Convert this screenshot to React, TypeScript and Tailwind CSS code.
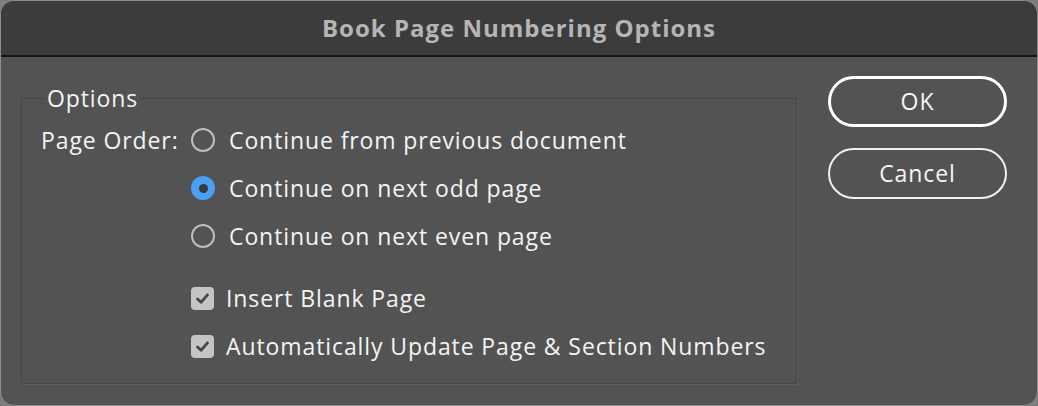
import React from 'react'

const font = { fontFamily: '"Open Sans", "Noto Sans", sans-serif' }

const Radio = ({ checked }: { checked?: boolean }) =>
  checked ? (
    <span className="flex h-[24px] w-[24px] items-center justify-center rounded-full bg-[#4b9ff3]">
      <span className="h-[9px] w-[9px] rounded-full bg-[#3a3a3a]" />
    </span>
  ) : (
    <span className="h-[24px] w-[24px] rounded-full border-2 border-[#bdbdbd]" />
  )

const Checkbox = () => (
  <span className="flex h-[23px] w-[23px] items-center justify-center rounded-[4px] bg-[#c4c4c4]">
    <svg width="15" height="15" viewBox="0 0 15 15">
      <path d="M2.5 8 L6 11.3 L12.5 3.8" fill="none" stroke="#474747" strokeWidth="2.8" strokeLinecap="round" strokeLinejoin="round" />
    </svg>
  </span>
)

export default function App() {
  const radios = [
    { label: 'Continue from previous document', checked: false },
    { label: 'Continue on next odd page', checked: true },
    { label: 'Continue on next even page', checked: false },
  ]
  return (
    <div className="h-[406px] w-[1038px] bg-[#7d7d7d]" style={font}>
      <div className="flex h-full w-full flex-col overflow-hidden rounded-[14px] border border-[#8c8c8c] bg-[#535353]">
        <div className="flex h-[56px] shrink-0 items-center justify-center border-b-2 border-[#141414] bg-[#3c3c3c]">
          <span className="text-[24px] font-bold tracking-[1px] text-[#b5b5b5]">Book Page Numbering Options</span>
        </div>
        <div className="flex flex-1 pl-[20px] pr-[30px] pt-[28px] tracking-[0.9px]">
          <fieldset className="m-0 h-[299px] w-[776px] rounded-[2px] border border-[#474747] pl-[19px] pr-0 pt-0 shadow-[1px_1px_0_#5e5e5e]">
            <legend className="ml-[4px] px-[2px] text-[23px] leading-[26px] text-[#f4f4f4]">Options</legend>
            <div className="mt-[12px] flex">
              <span className="w-[150px] text-[23px] leading-[34px] text-[#f4f4f4]">Page Order:</span>
              <div className="flex flex-col">
                {radios.map((r) => (
                  <div key={r.label} className="mb-[14px] flex h-[34px] items-center gap-[14px]">
                    <Radio checked={r.checked} />
                    <span className="text-[23px] text-[#f4f4f4]">{r.label}</span>
                  </div>
                ))}
              </div>
            </div>
            <div className="ml-[150px] mt-[14px] flex flex-col gap-[14px]">
              {['Insert Blank Page', 'Automatically Update Page & Section Numbers'].map((t) => (
                <div key={t} className="flex h-[34px] items-center gap-[12px]">
                  <Checkbox />
                  <span className="text-[23px] text-[#f4f4f4]">{t}</span>
                </div>
              ))}
            </div>
          </fieldset>
          <div className="-mt-[9px] ml-auto flex w-[179px] flex-col gap-[21px]">
            <button className="h-[51px] w-full rounded-full border-[3px] border-white text-[23px] text-[#f5f5f5]">
              OK
            </button>
            <button className="h-[51px] w-full rounded-full border-2 border-[#f0f0f0] text-[23px] text-[#f5f5f5]">
              Cancel
            </button>
          </div>
        </div>
      </div>
    </div>
  )
}
